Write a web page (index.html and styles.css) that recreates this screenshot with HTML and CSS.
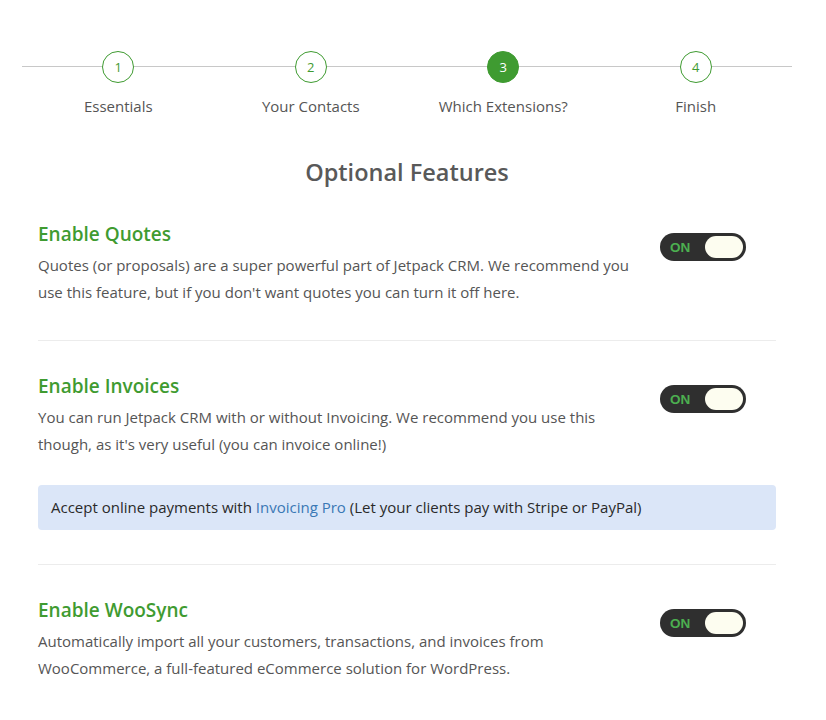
FILE: index.html
```html
<!DOCTYPE html>
<html>
<head>
<meta charset="utf-8">
<link rel="stylesheet" href="styles.css">
</head>
<body>
<div class="steps">
  <div class="step"><div class="circle">1</div><div class="label">Essentials</div></div>
  <div class="step"><div class="circle">2</div><div class="label">Your Contacts</div></div>
  <div class="step"><div class="circle active">3</div><div class="label">Which Extensions?</div></div>
  <div class="step"><div class="circle">4</div><div class="label">Finish</div></div>
</div>
<h1 class="title">Optional Features</h1>
<div class="content">
  <div class="section first">
    <div class="row">
      <div class="text">
        <h2 class="heading">Enable Quotes</h2>
        <p class="desc">Quotes (or proposals) are a super powerful part of Jetpack CRM. We recommend you use this feature, but if you don't want quotes you can turn it off here.</p>
      </div>
      <div class="toggle"><span class="on">ON</span><span class="knob"></span></div>
    </div>
  </div>
  <div class="section">
    <div class="row">
      <div class="text">
        <h2 class="heading">Enable Invoices</h2>
        <p class="desc">You can run Jetpack CRM with or without Invoicing. We recommend you use this though, as it's very useful (you can invoice online!)</p>
      </div>
      <div class="toggle"><span class="on">ON</span><span class="knob"></span></div>
    </div>
    <div class="info">Accept online payments with <a class="link" href="#">Invoicing Pro</a> (Let your clients pay with Stripe or PayPal)</div>
  </div>
  <div class="section last">
    <div class="row">
      <div class="text">
        <h2 class="heading">Enable WooSync</h2>
        <p class="desc">Automatically import all your customers, transactions, and invoices from WooCommerce, a full-featured eCommerce solution for WordPress.</p>
      </div>
      <div class="toggle"><span class="on">ON</span><span class="knob"></span></div>
    </div>
  </div>
</div>
</body>
</html>
```
FILE: styles.css
```css
html, body {
  margin: 0;
  padding: 0;
  background: #fff;
}
body {
  font-family: "Open Sans", "DejaVu Sans", sans-serif;
  color: #555;
  width: 826px;
}
.steps {
  position: relative;
  display: flex;
  margin: 0 34px 0 22px;
  padding-top: 51px;
}
.steps::before {
  content: "";
  position: absolute;
  left: 0;
  right: 0;
  top: 66px;
  height: 1px;
  background: #c8c8c8;
}
.step {
  flex: 1 1 0;
  display: flex;
  flex-direction: column;
  align-items: center;
  position: relative;
}
.circle {
  width: 30px;
  height: 30px;
  border: 1px solid #3f9b31;
  border-radius: 50%;
  background: #fff;
  color: #3f9b31;
  font-size: 13px;
  line-height: 30px;
  text-align: center;
}
.circle.active {
  background: #3f9b31;
  color: #fff;
}
.label {
  margin-top: 13px;
  font-size: 15px;
  line-height: 20px;
  color: #555;
}
.title {
  margin: 40px 50px 0 38px;
  text-align: center;
  font-size: 23.5px;
  line-height: 32px;
  font-weight: 600;
  color: #595959;
}
.content {
  margin: 32px 50px 0 38px;
}
.section {
  padding: 31px 0 34px;
  border-bottom: 1px solid #ececec;
}
.section.first {
  padding-top: 0;
}
.section.last {
  border-bottom: none;
}
.row {
  display: flex;
  justify-content: space-between;
  align-items: flex-start;
}
.text {
  width: 596px;
}
.heading {
  margin: 0;
  font-size: 19px;
  line-height: 28px;
  font-weight: 600;
  color: #3f9b31;
}
.desc {
  margin: 4px 0 0;
  font-size: 15px;
  line-height: 27px;
  color: #555;
}
.toggle {
  margin-top: 13px;
  margin-right: 30px;
  width: 86px;
  height: 28px;
  box-sizing: border-box;
  border-radius: 14px;
  background: #2f2f2f;
  display: flex;
  align-items: center;
  justify-content: space-between;
  padding: 0 3px 0 10px;
}
.on {
  color: #4caf50;
  font-family: "Liberation Sans", Arial, sans-serif;
  font-weight: 700;
  font-size: 13.5px;
}
.knob {
  width: 38px;
  height: 22px;
  border-radius: 11px;
  background: #fdfdf0;
}
.info {
  margin-top: 27px;
  background: #dbe6f8;
  border-radius: 4px;
  padding: 0 13px;
  height: 45px;
  line-height: 45px;
  font-size: 15px;
  color: #2a2a2a;
}
.link {
  color: #3a78b5;
  text-decoration: none;
}
```
